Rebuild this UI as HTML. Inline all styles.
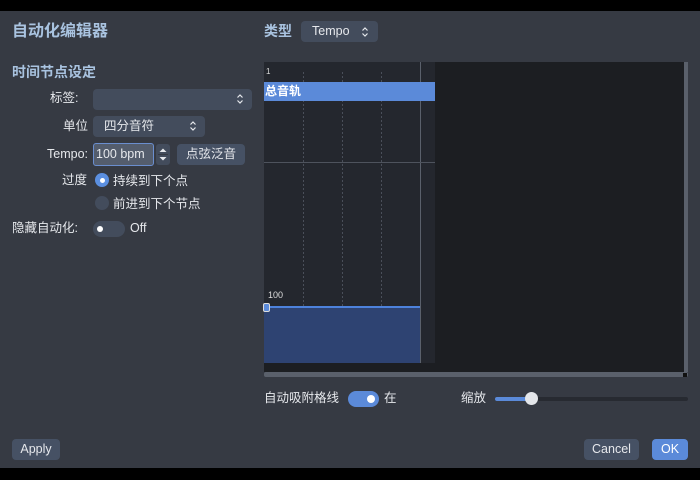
<!DOCTYPE html>
<html><head><meta charset="utf-8"><style>
*{margin:0;padding:0;box-sizing:border-box}
body{width:700px;height:480px;background:#000;position:relative;overflow:hidden;font-family:"Liberation Sans","Noto Sans CJK SC",sans-serif;color:#e6e8ec;font-size:12.5px;line-height:15px}
#win{position:absolute;left:0;top:11px;width:700px;height:457px;background:#363a43}
.a{position:absolute;white-space:nowrap}
.h{color:#a9c3e0;font-weight:bold}
.btn{position:absolute;background:#465164;border-radius:4px;color:#e6e8ec;text-align:center}
.sel{position:absolute;background:#434c5c;border-radius:4px}
.dot{position:absolute;width:1px;background:repeating-linear-gradient(#4a4f5a 0 2px,transparent 2px 4px)}
svg.ud{position:absolute;width:8px;height:12px}
</style></head><body>
<div id="win"></div>
<div class="a h" style="left:12px;top:23px;font-size:16px;line-height:18px">自动化编辑器</div>
<div class="a h" style="left:12px;top:64px;font-size:14px;line-height:16px">时间节点设定</div>
<div class="a" style="left:50px;top:91px">标签:</div>
<div class="sel" style="left:93px;top:89px;width:159px;height:21px"></div>
<svg class="ud" style="left:236px;top:93px" viewBox="0 0 8 12"><path d="M1.5 4.5L4 2L6.5 4.5M1.5 7.5L4 10L6.5 7.5" fill="none" stroke="#e6e8ec" stroke-width="1.2"/></svg>
<div class="a" style="left:63px;top:119px">单位</div>
<div class="sel" style="left:93px;top:116px;width:112px;height:21px"></div>
<div class="a" style="left:104px;top:119px">四分音符</div>
<svg class="ud" style="left:189px;top:120px" viewBox="0 0 8 12"><path d="M1.5 4.5L4 2L6.5 4.5M1.5 7.5L4 10L6.5 7.5" fill="none" stroke="#e6e8ec" stroke-width="1.2"/></svg>
<div class="a" style="left:47px;top:147px">Tempo:</div>
<div class="a" style="left:93px;top:143px;width:61px;height:23px;background:#545d6d;border:1px solid #6a8ecf;border-radius:3px;padding:3px 0 0 2px">100 bpm</div>
<svg class="a" style="left:156px;top:144px;width:14px;height:21px" viewBox="0 0 14 21"><rect width="14" height="21" rx="3" fill="#434c5c"/><path d="M3.5 8L7 4.5L10.5 8Z M3.5 13L7 16.5L10.5 13Z" fill="#e6e8ec"/><path d="M2 10.5H12" stroke="#363a43"/></svg>
<div class="btn" style="left:177px;top:144px;width:68px;height:21px;line-height:21px">点弦泛音</div>
<div class="a" style="left:62px;top:173px">过度</div>
<div class="a" style="left:95px;top:173px;width:14px;height:14px;border-radius:50%;background:#5b8fe0"></div>
<div class="a" style="left:100px;top:178px;width:5px;height:5px;border-radius:50%;background:#fff"></div>
<div class="a" style="left:113px;top:174px">持续到下个点</div>
<div class="a" style="left:95px;top:196px;width:14px;height:14px;border-radius:50%;background:#434c5c"></div>
<div class="a" style="left:113px;top:197px">前进到下个节点</div>
<div class="a" style="left:12px;top:221px">隐藏自动化:</div>
<div class="a" style="left:93px;top:221px;width:32px;height:16px;border-radius:8px;background:#434c5c"></div>
<div class="a" style="left:97px;top:226px;width:6px;height:6px;border-radius:50%;background:#fff"></div>
<div class="a" style="left:130px;top:221px">Off</div>
<div class="a h" style="left:264px;top:23px;font-size:14px;line-height:16px">类型</div>
<div class="sel" style="left:301px;top:21px;width:77px;height:21px"></div>
<div class="a" style="left:312px;top:24px">Tempo</div>
<svg class="ud" style="left:361px;top:26px" viewBox="0 0 8 12"><path d="M1.5 4.5L4 2L6.5 4.5M1.5 7.5L4 10L6.5 7.5" fill="none" stroke="#e6e8ec" stroke-width="1.2"/></svg>
<!-- graph -->
<div class="a" style="left:264px;top:62px;width:420px;height:310px;background:#1c1e22"></div>
<div class="a" style="left:264px;top:62px;width:171px;height:301px;background:#24272e"></div>
<div class="a" style="left:420px;top:62px;width:1px;height:301px;background:#5a606b"></div>
<div class="a" style="left:264px;top:162px;width:171px;height:1px;background:#4e535d"></div>
<div class="dot" style="left:303px;top:72px;height:291px"></div>
<div class="dot" style="left:342px;top:72px;height:291px"></div>
<div class="dot" style="left:381px;top:72px;height:291px"></div>
<div class="a" style="left:266px;top:67px;font-size:8px;line-height:9px;color:#ddd">1</div>
<div class="a" style="left:264px;top:82px;width:171px;height:19px;background:#5b8ad9"></div>
<div class="a" style="left:265px;top:84px;color:#fff;font-weight:bold;font-size:12px">总音轨</div>
<div class="a" style="left:268px;top:290px;font-size:9px;line-height:10px;color:#ddd">100</div>
<div class="a" style="left:264px;top:307px;width:156px;height:56px;background:#2e4372"></div>
<div class="a" style="left:264px;top:306px;width:156px;height:2px;background:#4d82dc"></div>
<div class="a" style="left:263px;top:303px;width:7px;height:9px;border:1px solid #ddd;border-radius:2px;background:#5b8ad9"></div>
<div class="a" style="left:684px;top:62px;width:4px;height:310px;background:#5a606b"></div>
<div class="a" style="left:264px;top:372px;width:424px;height:5px;background:#5a606b;border-radius:2px"></div>
<div class="a" style="left:683px;top:373px;width:4px;height:4px;background:#111"></div>
<div class="a" style="left:264px;top:391px">自动吸附格线</div>
<div class="a" style="left:348px;top:391px;width:31px;height:16px;border-radius:8px;background:#5b8ad9"></div>
<div class="a" style="left:367px;top:395px;width:8px;height:8px;border-radius:50%;background:#fff"></div>
<div class="a" style="left:384px;top:391px">在</div>
<div class="a" style="left:461px;top:391px">缩放</div>
<div class="a" style="left:495px;top:397px;width:193px;height:4px;border-radius:2px;background:#272a31"></div>
<div class="a" style="left:495px;top:397px;width:36px;height:4px;border-radius:2px;background:#5b8ad9"></div>
<div class="a" style="left:525px;top:392px;width:13px;height:13px;border-radius:50%;background:#e4e6ea"></div>
<div class="btn" style="left:12px;top:439px;width:48px;height:21px;line-height:21px">Apply</div>
<div class="btn" style="left:584px;top:439px;width:55px;height:21px;line-height:21px">Cancel</div>
<div class="btn" style="left:652px;top:439px;width:36px;height:21px;line-height:21px;background:#5b8ad9;color:#fff">OK</div>
</body></html>
